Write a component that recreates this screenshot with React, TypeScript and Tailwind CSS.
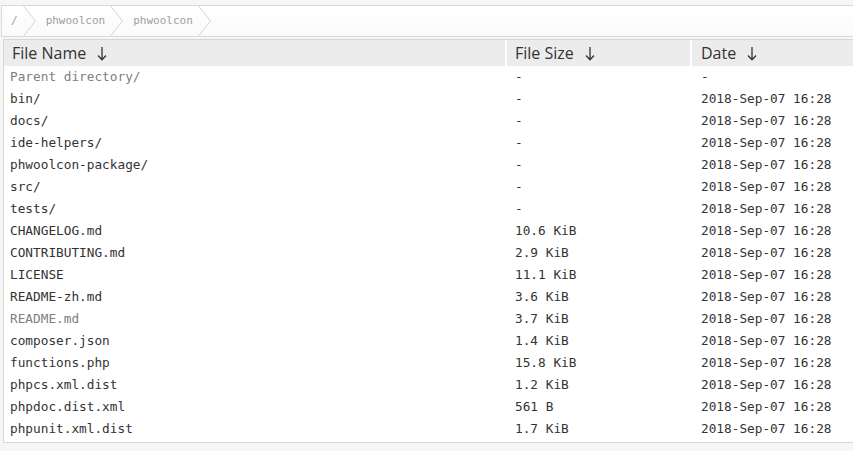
const rows: { name: string; size: string; date: string; muted?: boolean }[] = [
  { name: "Parent directory/", size: "-", date: "-", muted: true },
  { name: "bin/", size: "-", date: "2018-Sep-07 16:28" },
  { name: "docs/", size: "-", date: "2018-Sep-07 16:28" },
  { name: "ide-helpers/", size: "-", date: "2018-Sep-07 16:28" },
  { name: "phwoolcon-package/", size: "-", date: "2018-Sep-07 16:28" },
  { name: "src/", size: "-", date: "2018-Sep-07 16:28" },
  { name: "tests/", size: "-", date: "2018-Sep-07 16:28" },
  { name: "CHANGELOG.md", size: "10.6 KiB", date: "2018-Sep-07 16:28" },
  { name: "CONTRIBUTING.md", size: "2.9 KiB", date: "2018-Sep-07 16:28" },
  { name: "LICENSE", size: "11.1 KiB", date: "2018-Sep-07 16:28" },
  { name: "README-zh.md", size: "3.6 KiB", date: "2018-Sep-07 16:28" },
  { name: "README.md", size: "3.7 KiB", date: "2018-Sep-07 16:28", muted: true },
  { name: "composer.json", size: "1.4 KiB", date: "2018-Sep-07 16:28" },
  { name: "functions.php", size: "15.8 KiB", date: "2018-Sep-07 16:28" },
  { name: "phpcs.xml.dist", size: "1.2 KiB", date: "2018-Sep-07 16:28" },
  { name: "phpdoc.dist.xml", size: "561 B", date: "2018-Sep-07 16:28" },
  { name: "phpunit.xml.dist", size: "1.7 KiB", date: "2018-Sep-07 16:28" },
];

function Chevron() {
  return (
    <svg width="13" height="30" viewBox="0 0 13 30" className="shrink-0">
      <polyline points="0.5,0 12.5,15 0.5,30" fill="none" stroke="#d4d4d4" strokeWidth="1" />
    </svg>
  );
}

function DownArrow() {
  return (
    <svg width="10" height="15" viewBox="0 0 10 15" className="ml-[11px] shrink-0">
      <path d="M5 1 V13.5 M1 9.5 L5 13.8 L9 9.5" fill="none" stroke="#333" strokeWidth="1.3" />
    </svg>
  );
}

function Crumb({ label, first }: { label: string; first?: boolean }) {
  return (
    <div className="flex items-center">
      <span className={`${first ? "pl-[9px]" : "pl-[10px]"} pr-[5px] text-[11px] text-[#a0a0a0]`}>{label}</span>
      <Chevron />
    </div>
  );
}

function HeadCell({ label, w, pl }: { label: string; w: string; pl: string }) {
  return (
    <div className={`${w} ${pl} shrink-0 bg-[#ececec] flex items-center h-[26px]`}>
      <span>{label}</span>
      <DownArrow />
    </div>
  );
}

export default function App() {
  return (
    <div className="w-[853px] h-[451px] overflow-hidden bg-[#f6f6f6] font-['DejaVu_Sans_Mono',monospace]">
      <div className="h-[5px]" />
      <div className="ml-[1px] w-[860px] h-[32px] flex items-stretch border-y border-l border-[#d9d9d9] bg-gradient-to-b from-white to-[#fafafa]">
        <Crumb label="/" first />
        <Crumb label="phwoolcon" />
        <Crumb label="phwoolcon" />
      </div>
      <div className="ml-[3px] mt-[2px] w-[870px] border border-[#d6d6d6] bg-white pb-[2px]">
        <div className="flex gap-[2px] bg-white font-['Open_Sans',sans-serif] text-[16px] text-[#333]">
          <HeadCell label="File Name" w="w-[501px]" pl="pl-[8px]" />
          <HeadCell label="File Size" w="w-[183px]" pl="pl-[8px]" />
          <HeadCell label="Date" w="w-[180px]" pl="pl-[9px]" />
        </div>
        <div className="text-[12.75px] text-[#333]">
          {rows.map((r) => (
            <div key={r.name} className="flex gap-[2px] h-[22px] items-center">
              <div className={`w-[501px] pl-[6px] ${r.muted ? "text-[#808080]" : ""}`}>{r.name}</div>
              <div className="w-[183px] pl-[8px]">{r.size}</div>
              <div className="w-[180px] pl-[9px]">{r.date}</div>
            </div>
          ))}
        </div>
      </div>
    </div>
  );
}
